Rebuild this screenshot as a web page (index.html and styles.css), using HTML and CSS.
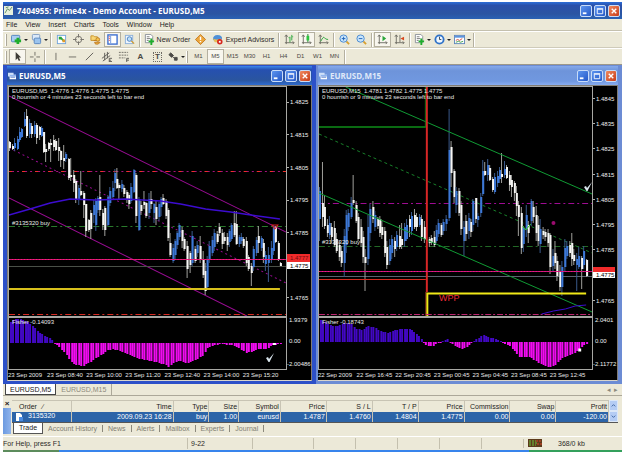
FILE: index.html
```html
<!DOCTYPE html>
<html lang="en">
<head>
<meta charset="utf-8">
<title>7404955: Prime4x - Demo Account - EURUSD,M5</title>
<link rel="stylesheet" href="styles.css">
</head>
<body>
<svg class="defs" aria-hidden="true">
  <symbol id="plus" viewBox="0 0 6 6"><path d="M2 0h2v2h2v2H4v2H2V4H0V2h2z" fill="#1fae2c"/></symbol>
  <symbol id="doc" viewBox="0 0 12 12"><path d="M1.500.500h6l2 2v7h-8z" fill="#fff" stroke="#8a8f98"/><path d="M3 3h3M3 5h4M3 7h2" stroke="#777"/><path d="M7 5h2v2h2v2H9v3H7V9H5V7h2z" fill="#1fae2c"/></symbol>
  <symbol id="axes" viewBox="0 0 12 12"><path d="M2.500 1v10M1 9.500h10M1 3l1.500-2L4 3M9.500 8l1.500 1.500L9.500 11" fill="none" stroke="#6c6a62"/></symbol>
  <symbol id="win" viewBox="0 0 10 9"><path d="M0 0h7v5H0z" fill="#cfe0f8"/><path d="M2 3h8v6H2z" fill="#fff"/><path d="M2 3h8v2H2z" fill="#8fb4ee"/><path d="M3 6h6" stroke="#3d69c4"/></symbol>
  <symbol id="check" viewBox="0 0 10 10"><path d="M1 6l2-1 1 2 5-6-4.500 9H3.500z" fill="#d8e4ec"/></symbol>
</svg>
<main class="app">
  <header class="titlebar">
    <svg class="app-icon" viewBox="0 0 10 10"><path d="M0 0h10v10H0z" fill="#e8f0dc"/><path d="M1 8l3-5 2 2 3-4M2 2l3-1" fill="none" stroke="#5c8a62"/></svg>
    <h1>7404955: Prime4x - Demo Account - EURUSD,M5</h1>
    <div class="caption">
      <button aria-label="Minimize"><svg viewBox="0 0 11 11"><path d="M2 7h4v2H2z" fill="#fff"/></svg></button>
      <button aria-label="Restore"><svg viewBox="0 0 11 11"><path d="M2.500 3.500h6v5h-6zM2 3h7" fill="none" stroke="#fff"/></svg></button>
      <button class="close" aria-label="Close"><svg viewBox="0 0 11 11"><path d="M3 3l5 5M8 3L3 8" stroke="#fff" stroke-width="1.500"/></svg></button>
    </div>
  </header>
  <nav class="menu">
    <button>File</button><button>View</button><button>Insert</button><button>Charts</button><button>Tools</button><button>Window</button><button>Help</button>
  </nav>
  <div class="toolbar">
    <i class="grip"></i>
    <button class="drop" aria-label="New chart"><svg viewBox="0 0 12 12"><rect x=".5" y="1.500" width="9" height="7" rx="1" fill="#a9cdf2" stroke="#4e82bd"/><path d="M6 4h3v2h2v3H9v2H6V9H4V6h2z" fill="#1fae2c"/></svg></button>
    <button class="drop" aria-label="Profiles"><svg viewBox="0 0 12 12"><rect x="1.500" y=".5" width="8" height="6" rx="1" fill="#dceafa" stroke="#7f9dc2"/><rect x="3.500" y="4.500" width="7" height="6" rx="1" fill="#9cc4ee" stroke="#5684bd"/></svg></button>
    <i class="sep"></i>
    <button aria-label="Market Watch"><svg viewBox="0 0 12 12"><rect x="1.500" y="1.500" width="9" height="9" fill="#fff" stroke="#72a5dc"/><path d="M3 3h3v3H3z" fill="#2aa53a"/><path d="M5 4l4 4" stroke="#2aa53a" stroke-width="2"/><path d="M7 6h3v3H7z" fill="#e39a2a"/></svg></button>
    <button aria-label="Data Window"><svg viewBox="0 0 12 12"><circle cx="6" cy="6" r="3.500" fill="none" stroke="#74716a"/><path d="M6 0v4M6 8v4M0 6h4M8 6h4" stroke="#74716a"/></svg></button>
    <button aria-label="Navigator"><svg viewBox="0 0 12 12"><path d="M1 2h3l1 1h3v4H1z" fill="#f8d674" stroke="#c8932c"/><path d="M4 7h6M5 9h6l-2 2H6z" fill="#f2b840" stroke="#c07a22"/><circle cx="8.500" cy="6" r="2" fill="#f7c54c" stroke="#b97b22"/></svg></button>
    <button class="on" aria-label="Terminal"><svg viewBox="0 0 12 12"><rect x="1" y="1" width="10" height="10" fill="#fff" stroke="#3d6fd0" stroke-width="1.500"/><path d="M4 2v8" stroke="#6d95dc"/><path d="M2 3h1M2 5h1M2 7h1" stroke="#d33"/></svg></button>
    <button aria-label="Strategy Tester"><svg viewBox="0 0 12 12"><rect x="1.500" y="1.500" width="8" height="9" fill="#eef5fd" stroke="#8cb0da"/><circle cx="6" cy="5.500" r="2.500" fill="#bfe0fa" stroke="#4a80c0"/><path d="M8 7.500l3 3" stroke="#d09a30" stroke-width="1.500"/></svg></button>
    <i class="sep"></i>
    <button class="label order"><svg viewBox="0 0 12 12"><use href="#doc"/></svg>New Order</button>
    <button aria-label="MetaEditor"><svg viewBox="0 0 12 12"><path d="M6 .5L11.500 6 6 11.500.5 6z" fill="#eca63c" stroke="#c47a20"/><path d="M6 3v3.500M6 7.500V9" stroke="#fff" stroke-width="1.500"/></svg></button>
    <button class="label expert"><svg viewBox="0 0 12 12"><path d="M1 6q0-5 5-5t5 4l-2 3H3z" fill="#4f90d8"/><path d="M1 5q4 2 9 0l-2 4H3z" fill="#e8be58"/><circle cx="8.500" cy="8.500" r="3" fill="#d6281e"/><path d="M7.500 7.500h2v2h-2z" fill="#fff"/></svg>Expert Advisors</button>
    <i class="sep"></i>
    <button aria-label="Bar Chart"><svg viewBox="0 0 12 12"><use href="#axes"/><path d="M6.500 3v6M8.500 1v6M6 4h-1M9 3h1" stroke="#2aa53a"/></svg></button>
    <button class="on" aria-label="Candlesticks"><svg viewBox="0 0 12 12"><use href="#axes"/><path d="M7.500 0v9" stroke="#1a7a26"/><path d="M6 2h3v5H6z" fill="#2cc43e"/></svg></button>
    <button aria-label="Line Chart"><svg viewBox="0 0 12 12"><use href="#axes"/><path d="M3 8q3-6 4-4t4 2" fill="none" stroke="#2aa53a"/></svg></button>
    <i class="sep"></i>
    <button aria-label="Zoom In"><svg viewBox="0 0 12 12"><path d="M8 8l3 3" stroke="#d8a030" stroke-width="2"/><circle cx="5" cy="5" r="4" fill="#c9e5fb" stroke="#4487d0"/><path d="M3 5h4M5 3v4" stroke="#1f62b8"/></svg></button>
    <button aria-label="Zoom Out"><svg viewBox="0 0 12 12"><path d="M8 8l3 3" stroke="#d8a030" stroke-width="2"/><circle cx="5" cy="5" r="4" fill="#c9e5fb" stroke="#4487d0"/><path d="M3 5h4" stroke="#1f62b8"/></svg></button>
    <i class="sep"></i>
    <button class="on" aria-label="Auto Scroll"><svg viewBox="0 0 12 12"><use href="#axes"/><path d="M6 2l4 3-4 3z" fill="#2aa53a"/></svg></button>
    <button aria-label="Chart Shift"><svg viewBox="0 0 12 12"><use href="#axes"/><path d="M6.500 1v8" stroke="#6c6a62"/><path d="M11 3v4L7 5z" fill="#d8481e"/></svg></button>
    <i class="sep"></i>
    <button class="drop" aria-label="Indicators"><svg viewBox="0 0 12 12"><use href="#doc"/></svg></button>
    <button class="drop" aria-label="Periods"><svg viewBox="0 0 12 12"><circle cx="6" cy="6" r="4.500" fill="#eef6fe" stroke="#2f72c8" stroke-width="2"/><path d="M6 3v3h2" fill="none" stroke="#345"/></svg></button>
    <button class="drop" aria-label="Templates"><svg viewBox="0 0 12 12"><rect x=".5" y="1.500" width="11" height="9" fill="#fff" stroke="#5f86ba"/><path d="M1 3h10" stroke="#5c94de" stroke-width="2"/><path d="M2 7l2-1 2 1 3-2" fill="none" stroke="#d2463c"/><path d="M2 9l3-1 2 1 3-1" fill="none" stroke="#3a9b48"/></svg></button>
    <i class="sep"></i>
  </div>
  <div class="toolbar tools">
    <i class="grip"></i>
    <button class="on" aria-label="Cursor"><svg viewBox="0 0 12 12"><path d="M4 1v9l2-2 1.500 3 1.500-1-1.500-3H10z" fill="#3e3c38"/></svg></button>
    <button aria-label="Crosshair"><svg viewBox="0 0 12 12"><path d="M6.500 1v4M6.500 8v4M1 6.500h4M8 6.500h4" stroke="#6c6a62"/></svg></button>
    <i class="sep"></i>
    <button aria-label="Vertical Line"><svg viewBox="0 0 12 12"><path d="M6.500 2v8" stroke="#6c6a62"/></svg></button>
    <button aria-label="Horizontal Line"><svg viewBox="0 0 12 12"><path d="M2 6.500h8" stroke="#6c6a62"/></svg></button>
    <button aria-label="Trendline"><svg viewBox="0 0 12 12"><path d="M2 10l8-8" stroke="#5c5a54"/></svg></button>
    <button aria-label="Channel"><svg viewBox="0 0 12 12"><path d="M1 8l8-6M2 11l8-6M4 2v8M7 1v7M9 8v4M9 8h3M9 10h2M9 11.500h3" stroke="#5c5a54" fill="none"/></svg></button>
    <button aria-label="Fibonacci"><svg viewBox="0 0 12 12"><path d="M1 1.500h10M1 4.500h10M1 7.500h7" stroke="#6c6a62" stroke-dasharray="2 1"/><path d="M9.500 12V8H12M9 10h3" fill="none" stroke="#5c5a54"/></svg></button>
    <button class="glyph">A</button>
    <button class="glyph boxed" aria-label="Text label"><span>T</span></button>
    <button class="drop" aria-label="Arrows"><svg viewBox="0 0 12 12"><path d="M1 4l2-2 3 3-2 2zM7 7h3v3H7zM5 6l3 3" fill="#4c4a46" stroke="#4c4a46"/></svg></button>
    <i class="grip"></i>
    <button>M1</button><button class="on">M5</button><button>M15</button><button>M30</button><button>H1</button><button>H4</button><button>D1</button><button>W1</button><button>MN</button>
    <i class="sep"></i>
  </div>

  <div class="desktop">
    <section class="window active">
      <header>
        <svg class="win-icon" viewBox="0 0 10 9"><use href="#win"/></svg>
        <h2>EURUSD,M5</h2>
        <div class="caption">
          <button aria-label="Minimize"><svg viewBox="0 0 11 11"><path d="M2 7h4v2H2z" fill="#fff"/></svg></button>
          <button aria-label="Maximize"><svg viewBox="0 0 11 11"><path d="M2.500 3.500h6v5h-6zM2 3h7" fill="none" stroke="#fff"/></svg></button>
          <button class="close" aria-label="Close"><svg viewBox="0 0 11 11"><path d="M3 3l5 5M8 3L3 8" stroke="#fff" stroke-width="1.500"/></svg></button>
        </div>
      </header>
      <div class="chart">
        <div class="plot price">
          <svg class="canvas" viewBox="9 86 276 229" preserveAspectRatio="none">
            <path d="M9 95L285 231M9 197L246 315" stroke="#980c92"/>
            <path d="M9 147L285 282" stroke="#980c92" stroke-dasharray="2 3"/>
            <path d="M9 170.500h276" stroke="#a8107c" stroke-dasharray="5 3 2 3"/>
            <path d="M9 170.500h276" stroke="#f03028" stroke-dasharray="3 10"/>
            <path d="M9 225.500h276" stroke="#2a7a2c" stroke-dasharray="6 3 2 3"/>
            <path d="M9 265.500h276" stroke="#4a5048"/>
            <g id="candles-m5"></g>
            <path d="M9 214L30 208 50 202 70 198 95 199 125 198 160 200 180 203 205 208 230 211 250 214 279 218" fill="none" stroke="#3c0cd0" stroke-width="1.500"/>
            <path d="M9 258.500h276" stroke="#d8107c"/><path d="M9 258.500h276" stroke="#f83070" stroke-dasharray="1 2"/>
            <path d="M9 288h270" stroke="#d8c01c" stroke-width="2"/>
            <path d="M9 313.500h276" stroke="#d82a22" stroke-dasharray="6 3 2 3"/>
            <path d="M271 224h6l-3 4z" fill="none" stroke="#d82020"/>
          </svg>
          <p class="info">EURUSD,M5&nbsp; 1.4776 1.4776 1.4775 1.4775<br>0 hourrish or 4 minutes 23 seconds left to bar end</p>
          <p class="trade trade-m5">#3135320 buy</p>
        </div>
        <svg class="axis price-axis">
          <g class="ticks"><path d="M0 16.500h2M0 48.500h2M0 81.500h2M0 114.500h2M0 146.500h2M0 211.500h2"/></g>
          <rect y="168" width="23" height="8" fill="#f02a2a"/><rect y="176" width="23" height="7" fill="#fff"/>
          <text x="3" y="18">1.4825</text><text x="3" y="51">1.4815</text><text x="3" y="84">1.4805</text><text x="3" y="116">1.4795</text><text x="3" y="149">1.4785</text>
          <text x="3" y="174" class="dark">1.4777</text><text x="3" y="182" class="black">1.4775</text><text x="3" y="214">1.4765</text>
        </svg>
        <div class="plot fisher">
          <svg class="canvas" viewBox="9 317 276 51" preserveAspectRatio="none"><g id="fisher-m5"></g><path d="M272 343h3" stroke="#fff" stroke-width="2"/></svg>
          <p class="info">Fisher -0.14093</p>
          <svg class="mark mark-m5" viewBox="0 0 10 10"><use href="#check"/></svg>
        </div>
        <svg class="axis fisher-axis"><text x="2" y="6">1.9379</text><text x="2" y="27">0.00</text><text x="0" y="50">-2.00486</text></svg>
        <div class="times"><span>23 Sep 2009</span><span>23 Sep 08:40</span><span>23 Sep 10:00</span><span>23 Sep 11:20</span><span>23 Sep 12:40</span><span>23 Sep 14:00</span><span>23 Sep 15:20</span></div>
      </div>
    </section>

    <section class="window">
      <header>
        <svg class="win-icon" viewBox="0 0 10 9"><use href="#win"/></svg>
        <h2>EURUSD,M15</h2>
        <div class="caption">
          <button aria-label="Minimize"><svg viewBox="0 0 11 11"><path d="M2 7h4v2H2z" fill="#fff"/></svg></button>
          <button aria-label="Maximize"><svg viewBox="0 0 11 11"><path d="M2.500 3.500h6v5h-6zM2 3h7" fill="none" stroke="#fff"/></svg></button>
          <button class="close" aria-label="Close"><svg viewBox="0 0 11 11"><path d="M3 3l5 5M8 3L3 8" stroke="#fff" stroke-width="1.500"/></svg></button>
        </div>
      </header>
      <div class="chart">
        <div class="plot price">
          <svg class="canvas" viewBox="318 86 276 229" preserveAspectRatio="none">
            <path d="M318 202.500h276" stroke="#a00c94" stroke-dasharray="6 3 2 3"/>
            <path d="M318 245.500h276" stroke="#226a26" stroke-dasharray="6 3 2 3"/>
            <path d="M318 275.500h276" stroke="#5c6470"/>
            <path d="M318 133L594 252" stroke="#18802a" stroke-dasharray="3 3"/>
            <g id="candles-m15"></g>
            <path d="M345 86L594 193M318 192L594 311" stroke="#109c34"/>
            <path d="M318 126h108" stroke="#0a6a12" stroke-width="2"/><path d="M425.500 86v40" stroke="#0a7a14"/>
            <path d="M427 86v205" stroke="#d82626" stroke-width="2"/><path d="M426 291v24" stroke="#a03820"/>
            <path d="M318 270.500h276" stroke="#c80c88"/><path d="M318 270.500h276" stroke="#f83070" stroke-dasharray="1 2"/>
            <path d="M318 278.500h108" stroke="#d82a1e"/>
            <path d="M427.500 315V292.500H588" fill="none" stroke="#f0e818" stroke-width="2"/>
            <path d="M318 313.500h276" stroke="#c02470" stroke-dasharray="6 2 2 2"/>
            <path d="M543 313l12-3 12-2 10-3 11-1" fill="none" stroke="#3c0cd0"/>
            <path d="M524 225l3 4 5-6" fill="none" stroke="#28d428"/><circle cx="555" cy="222" r="2" fill="#9c0c70"/>
          </svg>
          <p class="info">EURUSD,M15&nbsp; 1.4781 1.4782 1.4775 1.4775<br>0 hourrish or 9 minutes 23 seconds left to bar end</p>
          <p class="trade trade-m15">#3135320 buy</p>
          <p class="wpp">WPP</p>
          <svg class="mark mark-m15" viewBox="0 0 10 10"><use href="#check"/></svg>
        </div>
        <svg class="axis price-axis">
          <g class="ticks"><path d="M0 12.500h2M0 37.500h2M0 62.500h2M0 88.500h2M0 113.500h2M0 138.500h2M0 163.500h2M0 214.500h2"/></g>
          <rect y="181" width="22" height="5" fill="#f02a2a"/><rect y="186" width="22" height="6" fill="#fff"/>
          <text x="3" y="15">1.4845</text><text x="3" y="40">1.4835</text><text x="3" y="65">1.4825</text><text x="3" y="91">1.4815</text><text x="3" y="116">1.4805</text><text x="3" y="141">1.4795</text><text x="3" y="166">1.4785</text>
          <text x="3" y="191" class="black">1.4775</text><text x="3" y="217">1.4765</text>
        </svg>
        <div class="plot fisher">
          <svg class="canvas" viewBox="318 317 276 51" preserveAspectRatio="none"><g id="fisher-m15"></g><path d="M580 349h3" stroke="#fff" stroke-width="3"/></svg>
          <p class="info">Fisher -0.18743</p>
        </div>
        <svg class="axis fisher-axis"><text x="2" y="6">2.0401</text><text x="2" y="27">0.00</text><text x="0" y="50">-2.11772</text></svg>
        <div class="times"><span>22 Sep 2009</span><span>22 Sep 16:45</span><span>22 Sep 20:45</span><span>23 Sep 00:45</span><span>23 Sep 04:45</span><span>23 Sep 08:45</span><span>23 Sep 12:45</span></div>
      </div>
    </section>
  </div>

  <nav class="chart-tabs"><button class="current">EURUSD,M5</button><button>EURUSD,M15</button><span class="arrows">&#9666;&ensp;&#9656;</span></nav>

  <section class="terminal">
    <aside><button aria-label="Close terminal">×</button><i></i></aside>
    <div class="terminal-body">
      <div class="orders">
        <table>
          <colgroup><col class="c-order"><col class="c-time"><col class="c-type"><col class="c-size"><col class="c-symbol"><col class="c-num"><col class="c-num"><col class="c-num"><col class="c-num"><col class="c-num"><col class="c-num"><col></colgroup>
          <thead><tr><th>Order&ensp; ∕</th><th>Time</th><th>Type</th><th>Size</th><th>Symbol</th><th>Price</th><th>S / L</th><th>T / P</th><th>Price</th><th>Commission</th><th>Swap</th><th>Profit</th></tr></thead>
          <tbody><tr><td><svg class="row-icon" viewBox="0 0 8 8"><path d="M1 0h4l2 2v6H1z" fill="#fff"/><path d="M4 4h4v4H4z" fill="#4c8ce0"/></svg>3135320</td><td>2009.09.23 16:28</td><td>buy</td><td>1.00</td><td>eurusd</td><td>1.4787</td><td>1.4760</td><td>1.4804</td><td>1.4775</td><td>0.00</td><td>0.00</td><td>-120.00</td></tr></tbody>
        </table>
        <div class="scroll"><button aria-label="Scroll up"><svg viewBox="0 0 8 8"><path d="M2 5l2-2 2 2" fill="none" stroke="#345c9c"/></svg></button><button aria-label="Scroll down"><svg viewBox="0 0 8 8"><path d="M2 3l2 2 2-2" fill="none" stroke="#345c9c"/></svg></button></div>
      </div>
      <nav class="terminal-tabs"><button class="current">Trade</button><button>Account History</button><button>News</button><button>Alerts</button><button>Mailbox</button><button>Experts</button><button>Journal</button></nav>
    </div>
  </section>

  <footer class="status">
    <span class="help">For Help, press F1</span><span class="profile">9-22</span><span class="cell wide"></span><span class="cell"></span><span class="cell"></span><span class="cell"></span><span class="cell"></span><span class="cell"></span>
    <span class="net"><svg viewBox="0 0 14 8"><path d="M0 0h14v8H0z" fill="#5c3a1c"/><path d="M1 2h7M1 4h8M1 6h7" stroke="#6cc23c" stroke-dasharray="2 1"/><path d="M8 2h6M9 5h5" stroke="#d84028" stroke-dasharray="2 1"/></svg>368/0 kb</span>
  </footer>
</main>
<div class="taskbar"></div>
<script src="chart.js"></script>
</body>
</html>
```
FILE: styles.css
```css
* { box-sizing: border-box; }
body { margin: 0; background: #fff; font: 7px/9px "Liberation Sans", Arial, sans-serif; color: #1c1c1c; }
h1, h2, p { margin: 0; }
button { border: 0; padding: 0; margin: 0; background: none; font: inherit; color: inherit; }
.defs { position: absolute; width: 0; height: 0; }
.app { margin: 2px 3px 0; background: #ece9d8; }

.titlebar { display: flex; align-items: center; gap: 4px; height: 17px; padding: 0 2px 0 1px; background: linear-gradient(#2c6ed8, #2a50aa 20%, #2b55a2 70%, #2a62b4); color: #fff; }
.titlebar h1 { flex: 1; font: bold 8px/12px "Open Sans", "Liberation Sans", sans-serif; white-space: nowrap; }
.app-icon { width: 9px; height: 9px; }
.caption { display: flex; gap: 2px; }
.caption button { width: 12px; height: 12px; border: 1px solid #c8dcf8; border-radius: 2px; background: linear-gradient(135deg, #5c94ee, #2458c8); }
.caption button.close { background: linear-gradient(135deg, #f08a60, #c83c18); }
.caption svg { display: block; width: 10px; height: 10px; }

.menu { display: flex; gap: 8px; height: 12px; padding-left: 3px; align-items: center; border-bottom: 1px solid #c4c0ae; }
.toolbar { display: flex; align-items: center; height: 17px; padding-left: 2px; border-top: 1px solid #fff; border-bottom: 1px solid #cfcbba; color: #2c2a28; }
.toolbar button { display: flex; flex: none; align-items: center; justify-content: center; width: 17px; height: 15px; }
.toolbar svg { width: 11px; height: 11px; flex: none; }
.toolbar .drop { width: 20px; gap: 2px; }
.toolbar .drop::after { content: ""; border: 2px solid transparent; border-top-color: #222; border-bottom: 0; }
.toolbar .on { background: #f8f6ee; border: 1px solid #b4b0a0; }
.toolbar .label { gap: 2px; white-space: nowrap; }
.toolbar .order { width: 50px; }
.toolbar .expert { width: 68px; gap: 3px; }
.grip { width: 2px; height: 12px; margin-right: 2px; border-left: 1px solid #fff; border-right: 1px solid #aca899; }
.sep { width: 2px; height: 14px; margin: 0 1px; border-left: 1px solid #b4b0a0; border-right: 1px solid #fff; }
.tools { border-bottom-color: #9c988a; color: #4a4844; font-size: 6px; }
.glyph { font-size: 8px; font-weight: bold; }
.boxed span { border: 1px dotted #6c6a62; padding: 0 1px; line-height: 8px; }

.desktop { display: flex; }
.window { flex: 307; min-width: 0; border: solid #6c8cd4; border-width: 1px 4px 3px 2px; background: #6c8cd4; }
.window.active { flex: 312; border-color: #2c50c8; border-width: 1px 4px 3px; background: #2c50c8; }
.window header { display: flex; align-items: center; gap: 3px; height: 19px; padding: 0 1px; background: linear-gradient(#86aaec, #6e94da 25%, #7098e0 80%, #88acf0); color: #dfe8f8; }
.window.active header { background: linear-gradient(#3c88ec, #2650b0 20%, #2a559f 75%, #2f6cd0); color: #fff; }
.window h2 { flex: 1; font: bold 8px/12px "Open Sans", "Liberation Sans", sans-serif; }
.win-icon { width: 8px; height: 8px; }
.chart { display: grid; grid-template-columns: 1fr 24px; border: 1px solid #807c74; border-left: 0; border-bottom-color: #d8d4cc; background: #000; color: #e8e8e8; font-size: 6px; }
.active .chart { border-left: 1px solid #807c74; }
.plot { position: relative; min-width: 0; overflow: hidden; border: solid #a8a8a4; border-width: 1px 1px 0; }
.fisher { border-width: 2px 1px 1px; }
.canvas { display: block; width: 100%; }
.price .canvas { height: 229px; }
.fisher .canvas { height: 51px; }
.info { position: absolute; left: 3px; top: 1px; line-height: 6px; white-space: nowrap; }
.trade { position: absolute; left: 3px; line-height: 8px; }
.trade-m5 { top: 132px; }
.trade-m15 { top: 151px; }
.wpp { position: absolute; left: 120px; top: 206px; font-size: 9px; line-height: 11px; color: #f02a38; }
.mark { position: absolute; width: 10px; height: 10px; }
.mark-m5 { left: 256px; top: 34px; }
.mark-m15 { left: 264px; top: 94px; }
.axis { display: block; width: 100%; }
.price-axis { height: 230px; }
.fisher-axis { height: 54px; }
.axis text { fill: #f0f0f0; font-size: 6px; }
.axis .dark { fill: #6c0c10; }
.axis .black { fill: #000; }
.ticks { stroke: #b0b0ac; }
.times { grid-column: 1 / -1; display: grid; grid-template-columns: repeat(7, minmax(0, 39fr)) 29fr; height: 10px; line-height: 10px; white-space: nowrap; }

.chart-tabs { display: flex; align-items: center; height: 12px; padding-left: 2px; border-bottom: 1px solid #aca899; color: #8c897c; }
.chart-tabs button { height: 11px; padding: 0 5px; border-right: 1px solid #aca899; }
.chart-tabs .current { padding: 0 4px; background: #fff; color: #222; border: 1px solid #444; border-top: 0; }
.arrows { margin-left: auto; padding-right: 4px; }

.terminal { display: flex; padding: 4px 4px 2px 0; }
.terminal aside { display: flex; flex-direction: column; width: 9px; padding-right: 1px; }
.terminal aside button { font-size: 8px; line-height: 8px; font-weight: bold; }
.terminal aside i { flex: 1; background: linear-gradient(90deg, #6c9ae0, #90b4ec); }
.terminal-body { flex: 1; min-width: 0; }
.orders { display: flex; }
table { flex: 1; width: 100%; table-layout: fixed; border-collapse: collapse; }
.c-order { width: 10%; }
.c-time { width: 17%; }
.c-type { width: 6%; }
.c-size { width: 5%; }
.c-symbol { width: 7%; }
.c-num { width: 7.700%; }
th, td { height: 11px; padding: 0 1px; text-align: right; font-weight: normal; white-space: nowrap; border-right: 1px solid #c8c4b4; }
th { border-top: 1px solid #c8c4b4; }
td { height: 10px; line-height: 8px; background: #2c64a8; color: #fff; }
th:first-child, td:first-child { text-align: left; }
th:first-child { padding-left: 7px; }
.row-icon { width: 8px; height: 8px; margin: 0 5px 0 2px; vertical-align: middle; }
.scroll { display: flex; flex-direction: column; width: 9px; }
.scroll button { flex: 1; display: flex; align-items: center; justify-content: center; border: 1px solid #dce8f8; background: #b4ccf4; }
.scroll svg { width: 7px; height: 7px; }
.terminal-tabs { display: flex; height: 12px; align-items: center; border-top: 1px solid #555; color: #807d72; }
.terminal-tabs button { padding: 0 5px; border-right: 1px solid #8c897c; line-height: 7px; }
.terminal-tabs .current { height: 11px; margin-left: 1px; background: #fff; border: 1px solid #555; border-top: 0; color: #222; }

.status { display: flex; align-items: center; height: 14px; border-top: 1px solid #fff; color: #2c2a28; }
.help { width: 184px; }
.profile { width: 65px; padding-left: 3px; }
.status .profile, .cell { height: 11px; line-height: 11px; border-left: 1px solid #c4c0ae; }
.cell { width: 42px; }
.cell.wide { width: 61px; }
.net { display: flex; flex: 1; align-items: center; gap: 16px; padding-left: 4px; border-left: 1px solid #c4c0ae; }
.net svg { width: 14px; height: 8px; }
.taskbar { height: 3px; margin: 0 3px; background: linear-gradient(90deg, #5c8c5c 9%, #3884ec 9%, #3884ec 85%, #34a05c 85%); }
```
FILE: chart.js
```js
// Each candle: x, high, low, body top, body bottom, colour (w = bear, b = bull).
const M5 = `9.5 140 150 141 147 w;12 143 149 145 148 w;14 137 150 142 147 b;17 135 149 138 148 b;19 126 141 131 139 b;21 127 137 128 136 b;24 111 126 118 125 b;26 108 137 115 135 w;29 118 137 122 133 b;31 122 137 125 133 w;34 120 136 124 133 b;36 122 143 124 137 w;39 125 139 126 134 w;41 125 136 127 135 b;43 131 152 131 151 w;45 143 161 148 151 w;48 141 150 142 148 w;50 138 161 142 144 w;53 134 150 139 146 w;55 138 150 140 149 w;58 137 160 146 150 w;60 149 166 150 159 w;63 144 168 157 160 w;65 151 161 153 158 b;68 157 179 158 177 w;70 157 180 174 176 w;73 169 191 174 182 w;75 178 202 180 199 w;78 184 204 187 198 b;80 170 195 190 194 w;83 190 217 192 204 w;85 203 236 203 230 w;88 218 231 219 229 w;90 209 238 212 228 w;93 199 222 204 214 b;95 197 230 200 224 b;97 195 212 197 209 b;99 174 215 196 209 w;102 208 229 212 224 w;104 205 235 207 229 w;107 194 225 196 224 b;109 186 205 190 202 b;112 180 197 187 196 b;114 168 190 172 182 b;116 167 188 178 187 w;118 182 198 184 187 w;121 179 191 183 188 b;123 184 196 187 193 w;126 189 202 191 198 w;128 192 208 194 203 w;130 182 202 186 200 b;133 168 192 169 191 b;135 172 222 174 215 w;138 196 230 198 229 b;140 200 214 204 210 w;143 190 208 201 204 w;145 201 217 202 215 w;148 192 218 198 212 b;150 190 208 198 203 w;153 202 222 203 212 b;155 200 224 206 218 w;158 201 220 203 216 b;160 196 215 198 206 b;162 193 204 197 203 w;165 198 218 200 215 w;167 207 240 209 237 w;169 232 256 242 254 w;172 243 262 247 260 b;174 238 258 240 254 b;176 230 248 232 244 b;178 222 239 224 236 b;181 226 247 229 240 w;183 236 250 238 248 w;186 240 277 245 268 w;189 250 272 252 264 w;191 230 265 235 262 b;194 245 262 248 260 w;196 240 256 244 252 b;199 235 262 245 258 w;202 250 277 258 274 w;204 262 294 270 290 w;206 255 288 258 286 b;208 240 262 245 258 b;211 235 255 239 252 b;213 228 250 232 246 b;216 230 243 233 241 w;218 222 235 226 232 w;221 228 248 232 243 w;223 231 243 236 240 w;226 232 250 236 244 w;228 228 246 230 241 b;230 222 240 224 238 b;233 210 236 222 234 w;235 210 244 223 243 w;238 234 246 236 243 b;240 232 243 236 240 b;242 236 247 238 245 w;245 236 265 240 262 w;247 254 270 256 268 w;250 262 285 265 272 w;252 245 270 248 266 b;255 236 255 239 252 b;257 225 252 235 242 w;260 235 250 237 247 b;262 238 262 242 256 w;264 250 270 254 263 b;267 246 281 254 262 b;270 240 262 247 258 b;272 224 254 226 250 b;274 225 242 226 241 w;277 240 260 242 258 w;279 261 265 262 265 w`;

const M15 = `318.5 186 240 190 218 b;321 161 226 202 216 w;323 194 228 206 225 w;326 218 236 224 232 w;328 215 238 222 234 b;330 222 242 226 236 w;333 220 246 227 244 w;335 232 252 238 250 w;338 240 260 244 256 w;340 245 266 250 262 w;343 228 276 235 262 b;345 209 252 214 244 b;347 208 230 212 226 b;350 196 218 202 216 b;352 174 204 199 202 w;355 200 222 204 220 w;357 212 240 216 238 w;360 218 246 226 242 w;362 230 262 236 256 w;364 248 290 256 262 w;367 214 264 226 258 b;369 203 240 208 232 b;372 200 222 206 218 w;374 210 230 214 226 b;377 216 228 218 225 w;379 215 236 218 232 w;381 220 238 226 234 w;384 226 256 230 252 w;386 240 268 246 264 w;389 238 264 244 260 b;391 234 258 238 252 b;394 236 256 240 248 w;396 230 250 234 246 b;399 224 248 235 246 w;401 222 248 238 244 w;404 222 246 226 240 b;406 218 240 224 238 b;409 214 236 218 226 w;411 211 234 215 230 b;414 208 228 214 226 w;416 212 230 216 226 w;419 213 226 216 224 b;421 214 240 218 236 w;424 220 242 226 238 w;429 236 246 238 242 w;431 234 244 237 242 w;434 230 246 236 244 w;436 224 242 229 240 b;438 218 236 222 233 b;441 222 236 224 234 w;443 218 234 221 230 b;446 214 230 218 223 b;449 108 220 149 217 b;451.5 140 186 146 172 w;454 168 202 170 196 w;456 186 212 190 204 b;459 187 215 190 212 w;461 200 234 204 228 w;464 220 255 226 240 b;466 214 240 220 233 w;469 212 238 217 230 b;471 218 236 221 231 w;473 198 230 200 224 b;476 197 222 197 218 w;478 212 226 215 219 b;481 192 216 196 212 b;483 159 195 170 193 b;485 161 175 170 174 w;488 158 180 164 174 b;490 164 180 167 179 w;493 176 191 178 189 w;495 172 193 176 191 b;498 170 186 175 182 b;500 166 182 169 178 b;502 152 182 173 176 w;505 160 177 168 174 b;507 164 178 166 177 w;510 170 190 174 184 w;512 174 196 179 186 w;515 180 200 182 192 w;517 185 215 192 205 w;519 200 235 204 216 w;522 206 253 212 247 w;524 225 251 227 243 b;527 204 236 214 228 b;529 220 242 224 232 w;532 198 225 200 220 b;534 200 222 206 216 w;537 205 240 214 232 w;539 215 245 224 240 w;541 218 252 228 243 b;544 226 238 230 234 w;546 228 240 231 236 w;549 228 246 232 242 w;551 232 273 234 266 w;554 248 270 255 265 b;556 240 268 252 262 w;558 255 280 260 275 w;561 264 290 270 286 w;563 260 295 266 286 b;566 238 270 247 266 b;568 240 258 245 255 b;571 240 256 244 252 w;573 232 265 242 258 w;575 248 264 254 260 w;578 252 290 258 264 b;580 246 268 255 266 b;583 255 288 257 268 w;585 245 268 250 264 b;588 258 276 259 275 w`;

// Key points of the histogram's outline; bars are drawn between them.
const FISHER_M5 = [[9,322],[14,318],[20,318],[27,321],[34,327],[38,331],[44,335],[50,338],[53,341],[56,344],[60,348],[65,353],[70,361],[75,364],[82,365],[88,362],[95,357],[102,353],[107,349],[112,348],[118,350],[125,353],[133,356],[140,358],[150,360],[157,362],[163,363],[167,366],[172,362],[178,360],[184,362],[190,361],[196,358],[202,354],[206,347],[212,344],[220,343],[230,344],[237,347],[245,352],[252,350],[258,348],[265,348],[270,344],[280,343]];
const FISHER_M15 = [[318,318],[323,321],[330,325],[337,325],[343,322],[350,323],[355,328],[362,329],[366,325],[372,326],[380,330],[386,332],[392,330],[400,328],[410,328],[415,332],[420,337],[423,341],[425,344],[429,346],[434,344],[438,342],[441,340],[447,338],[450,341],[453,344],[458,347],[462,348],[466,346],[471,342],[474,340],[478,337],[483,334],[488,336],[495,338],[502,340],[506,343],[510,345],[515,350],[520,356],[530,356],[535,359],[540,363],[550,366],[556,364],[562,358],[568,355],[574,353],[580,348],[584,345],[589,342]];

function rect(group, x, y, width, height, fill) {
  const node = document.createElementNS("http://www.w3.org/2000/svg", "rect");
  for (const [name, value] of Object.entries({ x, y, width, height, fill })) node.setAttribute(name, value);
  group.append(node);
}

function drawCandles(id, data) {
  const group = document.getElementById(id);
  for (const row of data.split(";")) {
    const parts = row.split(" ");
    const [x, high, low, top, bottom] = parts.map(Number);
    const bull = parts[5] === "b";
    const left = Math.floor(x);
    rect(group, left, high, 1, low - high, bull ? "#3a5a8c" : "#a0a09c");
    rect(group, left, top, 2, bottom - top, bull ? "#3c78d8" : "#f6f6f4");
  }
}

function drawHistogram(id, points, zero) {
  const group = document.getElementById(id);
  let k = 0;
  for (let x = points[0][0] + 1; x < points[points.length - 1][0]; x += 2.42) {
    while (points[k + 1][0] < x) k++;
    const [x0, y0] = points[k], [x1, y1] = points[k + 1];
    const y = Math.round(y0 + (y1 - y0) * (x - x0) / (x1 - x0));
    if (y < zero) rect(group, Math.round(x), y, 2, zero - y, "#4208c4");
    else rect(group, Math.round(x), zero, 2, Math.max(1, y - zero), "#f00cf0");
  }
}

drawCandles("candles-m5", M5);
drawCandles("candles-m15", M15);
drawHistogram("fisher-m5", FISHER_M5, 342);
drawHistogram("fisher-m15", FISHER_M15, 341);
```
